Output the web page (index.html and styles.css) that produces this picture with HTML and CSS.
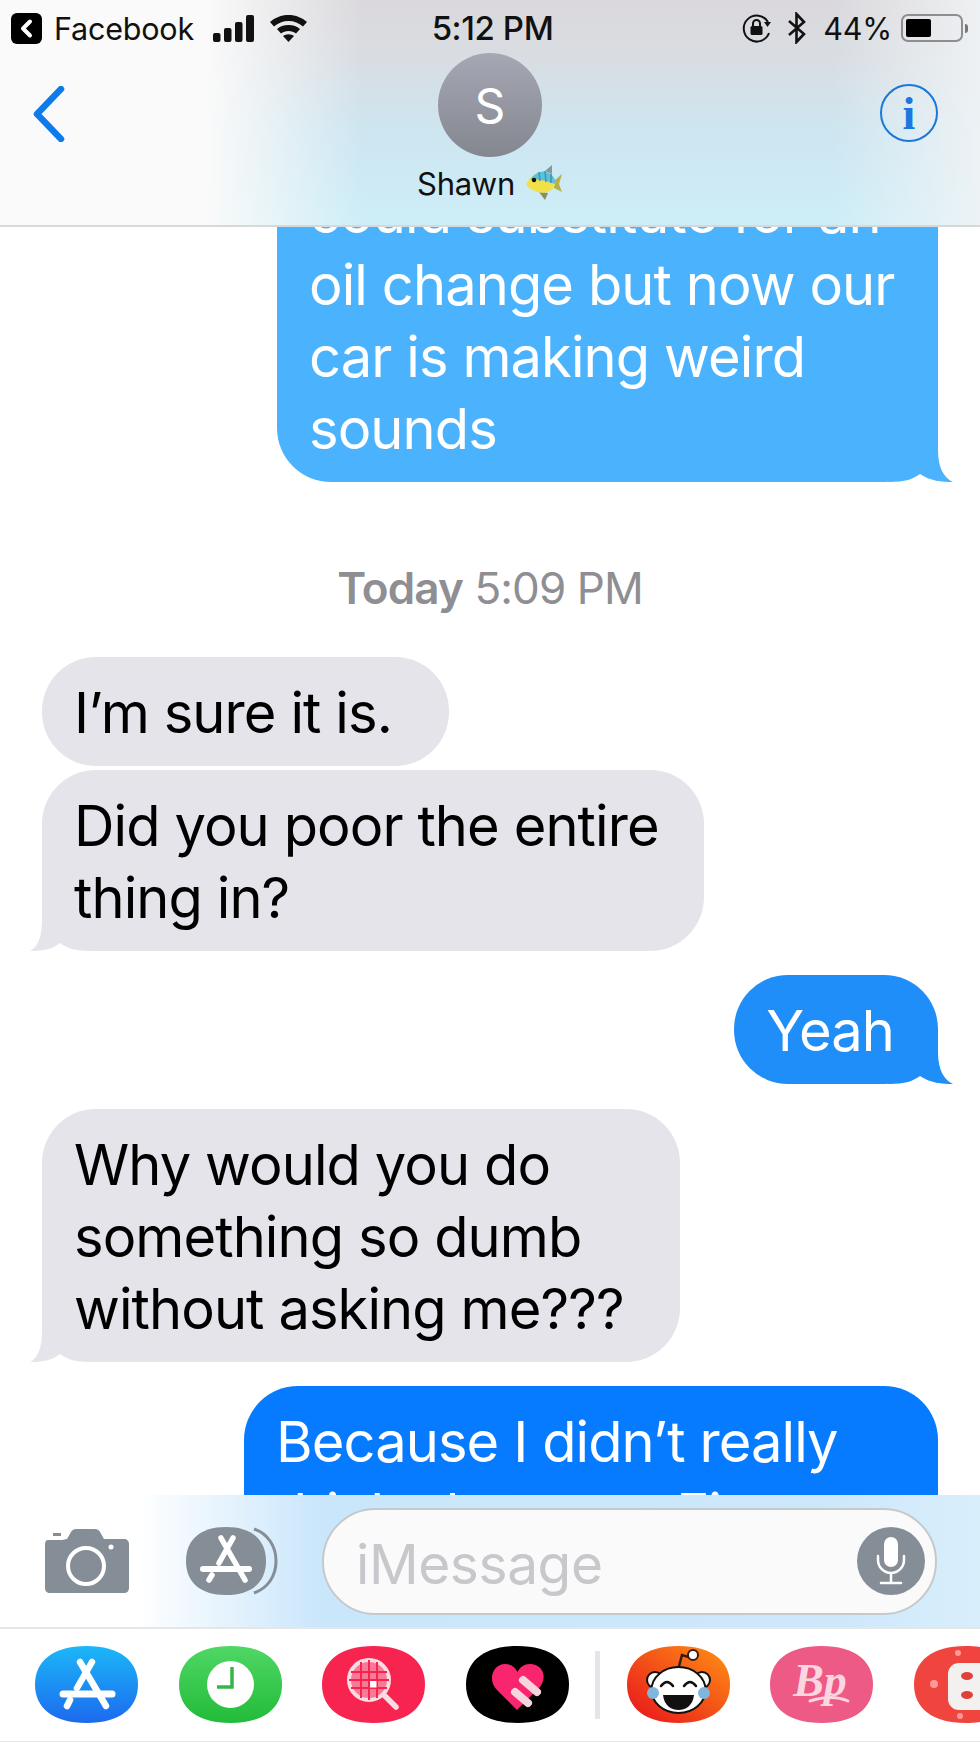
FILE: index.html
```html
<!DOCTYPE html>
<html lang="en">
<head>
<meta charset="utf-8">
<title>Shawn</title>
<link rel="stylesheet" href="styles.css">
</head>
<body>
<div class="phone">
  <header class="header">
    <div class="status">
      <div class="status-left">
        <span class="fb-box"><svg width="31" height="31" viewBox="0 0 31 31"><path d="M19 8.500 12 15.500 19 22.500" fill="none" stroke="#fff" stroke-width="4" stroke-linecap="round" stroke-linejoin="round"/></svg></span>
        <span class="status-text">Facebook</span>
        <svg class="signal" width="42" height="27" viewBox="0 0 42 27"><rect x="0" y="18" width="7.500" height="9" rx="2"/><rect x="11" y="13" width="7.500" height="14" rx="2"/><rect x="22" y="7" width="7.500" height="20" rx="2"/><rect x="33" y="0" width="8" height="27" rx="2"/></svg>
        <svg class="wifi" width="37" height="27" viewBox="0 0 37 27"><path d="M18.500 0C11 0 5 2.700 0 7l4 4.500C8 8 13 6 18.500 6S29 8 33 11.500L37 7C32 2.700 26 0 18.500 0z"/><path d="M18.500 10C13.500 10 10 11.500 7 14l4 4.500c2-1.500 4.500-2.500 7.500-2.500s5.500 1 7.500 2.500L30 14c-3-2.500-6.500-4-11.500-4z"/><path d="M18.500 27 13 21c1.500-1 3.500-1.800 5.500-1.800S22.500 20 24 21z"/></svg>
      </div>
      <div class="status-text status-time">5:12 PM</div>
      <div class="status-right">
        <svg width="30" height="30" viewBox="0 0 30 30"><path d="M26 9A13 13 0 1 0 27 20" fill="none" stroke="#111" stroke-width="2"/><path d="M22 9h7l-3.500 5z" fill="#111"/><rect x="8.500" y="13" width="12" height="9" rx="1.500" fill="#111"/><path d="M11 13v-2.500a3.500 3.500 0 0 1 7 0V13" fill="none" stroke="#111" stroke-width="2"/></svg>
        <svg class="bt" width="20" height="32" viewBox="0 0 20 32"><path d="M2 9 17 22 9.500 30V2L17 10 2 23" fill="none" stroke="#111" stroke-width="2.600"/></svg>
        <span class="status-text">44%</span>
        <span class="battery"><span class="battery-fill"></span></span>
        <span class="battery-nub"></span>
      </div>
    </div>
    <div class="nav">
      <svg class="back" width="32" height="56" viewBox="0 0 32 56"><path d="M28 3 4 28 28 53" fill="none" stroke="#0f7bea" stroke-width="6.500" stroke-linecap="round" stroke-linejoin="round"/></svg>
      <div class="contact">
        <div class="avatar">S</div>
        <div class="contact-name">
          <span>Shawn</span>
          <svg width="38" height="36" viewBox="0 0 38 36"><path d="M20 6 27 0 27 9z" fill="#7f9aa0"/><path d="M29 16 37 9 34 19 37 27 29 23z" fill="#b5b04a"/><path d="M14 27l6 8 3-7z" fill="#8a8f5a"/><path d="M1 20C6 9 16 4 24 8c5 3 7 8 6 12-3 7-11 9-17 7-5-1-9-4-12-7z" fill="#f2e04a"/><path d="M5 15C9 8 17 4 24 8c5 3 7 7 6 11-9-4-17-5-25-4z" fill="#5cc2dc"/><path d="M14 7 15 16M20 6 21 17M26 9 26 18" stroke="#3f93b5" stroke-width="1.500" fill="none"/><circle cx="9" cy="15" r="2.200" fill="#111"/></svg>
        </div>
      </div>
      <div class="info"><span>i</span></div>
    </div>
  </header>

  <main class="messages">
    <div class="bubble sent tone-sky first">could substitute for an<br>oil change but now our<br>car is making weird<br>sounds
      <svg class="tail tail-right" width="65" height="56" viewBox="0 0 65 56"><path d="M0 56C18 56 25 53 32 48 42 55 54 56 65 56 56 52 50 42 50 24V0z"/></svg>
    </div>
    <div class="timestamp"><b>Today</b> 5:09 PM</div>
    <div class="bubble received short">I’m sure it is.</div>
    <div class="bubble received joined">Did you poor the entire<br>thing in?
      <svg class="tail tail-left" width="65" height="56" viewBox="0 0 65 56"><path d="M0 56C18 56 25 53 32 48 40 55 52 56 62 56 54 52 50 42 50 24V0z"/></svg>
    </div>
    <div class="bubble sent tone-mid">Yeah
      <svg class="tail tail-right" width="65" height="56" viewBox="0 0 65 56"><path d="M0 56C18 56 25 53 32 48 42 55 54 56 65 56 56 52 50 42 50 24V0z"/></svg>
    </div>
    <div class="bubble received long">Why would you do<br>something so dumb<br>without asking me???
      <svg class="tail tail-left" width="65" height="56" viewBox="0 0 65 56"><path d="M0 56C18 56 25 53 32 48 40 55 52 56 62 56 54 52 50 42 50 24V0z"/></svg>
    </div>
    <div class="bubble sent tone-deep wide">Because I didn’t really<br>think about our Fiesta</div>
  </main>

  <section class="composer">
    <svg class="camera" width="84" height="64" viewBox="0 0 84 64"><path d="M3 11H17L22 10 26 3C27 1 29 0 31 0H50C52 0 54 1 55 3L59 10H79C82 10 84 12 84 15V59C84 62 82 64 79 64H5C2 64 0 62 0 59V15C0 13 1 11 3 11z" fill="#858d96"/><rect x="8" y="4" width="8" height="3" fill="#858d96"/><circle cx="41" cy="37" r="18" fill="none" stroke="#fff" stroke-width="4"/><circle cx="66" cy="18" r="2.500" fill="#fff"/></svg>
    <svg class="apps" width="92" height="70" viewBox="0 0 92 70"><path d="M68 3C82 8 90 20 90 35S82 62 68 67" fill="none" stroke="#858d96" stroke-width="3"/><path d="M40 1C66 1 80 14 80 35 80 56 66 69 40 69 14 69 0 56 0 35 0 14 14 1 40 1z" fill="#858d96"/><g fill="none" stroke="#fff" stroke-width="5.500" stroke-linecap="round"><path d="M47 12 33 37"/><path d="M26 49 23 54"/><path d="M35 12 59 54"/><path d="M17 43H63" stroke-width="6"/></g></svg>
    <div class="input">
      <span class="placeholder">iMessage</span>
      <span class="mic"><svg width="30" height="50" viewBox="0 0 30 50"><rect x="8" y="1" width="14" height="30" rx="7" fill="#fff"/><path d="M2 20V24A13 13 0 0 0 28 24V20M15 38V47M5 47H25" fill="none" stroke="#fff" stroke-width="2.500" stroke-linecap="round"/></svg></span>
    </div>
  </section>

  <nav class="apps-row">
    <svg class="app" width="103" height="77" viewBox="0 0 103 77"><defs><linearGradient id="g-blue" x1="0" y1="0" x2="0" y2="1"><stop offset="0" stop-color="#1cb7f8"/><stop offset="1" stop-color="#1c6aee"/></linearGradient></defs><path d="M51.500 0C85 0 103 15 103 38.500 103 62 85 77 51.500 77 18 77 0 62 0 38.500 0 15 18 0 51.500 0z" fill="url(#g-blue)"/><g fill="none" stroke="#fff" stroke-width="6.500" stroke-linecap="round"><path d="M57 16 42 42"/><path d="M35 54 32 60"/><path d="M45 16 71 60"/><path d="M28 48H77" stroke-width="7"/></g></svg>
    <svg class="app" width="103" height="77" viewBox="0 0 103 77"><defs><linearGradient id="g-green" x1="0" y1="0" x2="0" y2="1"><stop offset="0" stop-color="#4fd764"/><stop offset="1" stop-color="#22bb3a"/></linearGradient></defs><path d="M51.500 0C85 0 103 15 103 38.500 103 62 85 77 51.500 77 18 77 0 62 0 38.500 0 15 18 0 51.500 0z" fill="url(#g-green)"/><circle cx="51.500" cy="38.500" r="23.500" fill="#fff"/><path d="M53 21V41H38" fill="none" stroke="#34b64a" stroke-width="3.500"/></svg>
    <svg class="app" width="103" height="77" viewBox="0 0 103 77"><path d="M51.500 0C85 0 103 15 103 38.500 103 62 85 77 51.500 77 18 77 0 62 0 38.500 0 15 18 0 51.500 0z" fill="#f7244f"/><circle cx="47" cy="34" r="20" fill="#f97a96" stroke="#fbdce2" stroke-width="4"/><path d="M29 26H65M27 34H67M29 42H65M39 16V52M47 14V54M55 16V52" stroke="#f7244f" stroke-width="2" fill="none"/><rect x="48" y="35" width="6.500" height="6.500" fill="#fff"/><path d="M62 49 74 61" stroke="#fbdce2" stroke-width="5.500" stroke-linecap="round"/></svg>
    <svg class="app" width="103" height="77" viewBox="0 0 103 77"><path d="M51.500 0C85 0 103 15 103 38.500 103 62 85 77 51.500 77 18 77 0 62 0 38.500 0 15 18 0 51.500 0z" fill="#000"/><path d="M51 64 31 44C21 34 27 18 39 18 45 18 49 21 51.500 26 54 21 58 18 64 18 76 18 82 30 74 41z" fill="#f9256e"/><g stroke-linecap="round" fill="none"><path d="M57 34 71 46" stroke="#f6d5dc" stroke-width="8"/><path d="M49 46 62 57" stroke="#f6d5dc" stroke-width="8"/></g></svg>
    <span class="divider"></span>
    <svg class="app" width="103" height="77" viewBox="0 0 103 77"><defs><linearGradient id="g-red" x1="0" y1="1" x2="1" y2="0"><stop offset="0" stop-color="#e8111c"/><stop offset="1" stop-color="#ff9214"/></linearGradient></defs><path d="M51.500 0C85 0 103 15 103 38.500 103 62 85 77 51.500 77 18 77 0 62 0 38.500 0 15 18 0 51.500 0z" fill="url(#g-red)"/><path d="M51 24 55 9 65 12" fill="none" stroke="#3a1a0a" stroke-width="2.500"/><circle cx="66" cy="9" r="5" fill="#fff" stroke="#3a1a0a" stroke-width="2"/><circle cx="28" cy="34" r="8" fill="#fff" stroke="#111" stroke-width="2"/><circle cx="75" cy="34" r="8" fill="#fff" stroke="#111" stroke-width="2"/><ellipse cx="51.500" cy="44" rx="27" ry="23" fill="#fff" stroke="#111" stroke-width="2"/><path d="M34 40Q40 32 46 40M57 40Q63 32 69 40" fill="none" stroke="#111" stroke-width="2.500" stroke-linecap="round"/><path d="M36 49H67C66 60 58 64 51.500 64S37 60 36 49z" fill="#111"/><circle cx="26" cy="47" r="6" fill="#7fb6df"/><circle cx="77" cy="47" r="6" fill="#7fb6df"/></svg>
    <svg class="app" width="103" height="77" viewBox="0 0 103 77"><path d="M51.500 0C85 0 103 15 103 38.500 103 62 85 77 51.500 77 18 77 0 62 0 38.500 0 15 18 0 51.500 0z" fill="#ee5a86"/><text x="50" y="50" class="bp-text">Bp</text><path d="M40 55Q62 48 78 55" fill="none" stroke="#fbd5df" stroke-width="3" stroke-linecap="round"/></svg>
    <svg class="app" width="103" height="77" viewBox="0 0 103 77"><path d="M51.500 0C85 0 103 15 103 38.500 103 62 85 77 51.500 77 18 77 0 62 0 38.500 0 15 18 0 51.500 0z" fill="#f0453f"/><circle cx="20" cy="38" r="4" fill="#f99"/><circle cx="44" cy="7" r="3" fill="#f99"/><circle cx="46" cy="70" r="3" fill="#f99"/><rect x="34" y="17" width="50" height="47" rx="11" fill="#f3f1ef"/><ellipse cx="53" cy="30" rx="6" ry="4" fill="#e0403a"/><ellipse cx="53" cy="49" rx="6" ry="4" fill="#e0403a"/></svg>
  </nav>
</div>
</body>
</html>
```

FILE: styles.css
```css
* { box-sizing: border-box; }
html, body { margin: 0; padding: 0; background: #fff; }
.phone {
  width: 980px;
  height: 1742px;
  display: flex;
  flex-direction: column;
  overflow: hidden;
  font-family: Inter, "Liberation Sans", sans-serif;
  color: #000;
}

/* header */
.header {
  flex: 0 0 227px;
  border-bottom: 2px solid #d8d8d8;
  background:
    linear-gradient(90deg, #fafafa 0, #fafafa 21%, rgba(250,250,250,0) 37%, rgba(245,246,247,0) 85%, rgba(240,243,245,.9) 100%),
    linear-gradient(180deg, #dbd8dc 0, #d8dde2 25%, #cde6f1 60%, #cdeef8 100%);
  position: relative;
  z-index: 1;
}
.status {
  display: grid;
  grid-template-columns: 1fr auto 1fr;
  align-items: center;
  height: 50px;
  padding: 6px 12px 0 11px;
}
.status-text { font-size: 30.500px; color: #111; letter-spacing: -0.2px; }
.status-time { font-size: 33px; font-weight: 500; letter-spacing: -0.4px; margin-left: 6px; }
.status-left { display: flex; align-items: center; }
.fb-box { width: 31px; height: 31px; border-radius: 6px; background: #000; display: flex; }
.fb-box + .status-text { margin-left: 12px; }
.signal { margin-left: 19px; fill: #111; }
.wifi { margin-left: 15px; fill: #111; }
.status-right { display: flex; align-items: center; justify-content: flex-end; }
.bt { margin-left: 15px; }
.status-right .status-text { margin-left: 16px; }
.battery { width: 62px; height: 28px; margin-left: 9px; border: 2px solid #8e8e8e; border-radius: 7px; padding: 3px; display: flex; }
.battery-fill { width: 25px; background: #000; border-radius: 2px; }
.battery-nub { width: 3px; height: 9px; margin-left: 2px; background: #777; border-radius: 0 3px 3px 0; }

.nav {
  display: grid;
  grid-template-columns: 1fr auto 1fr;
  align-items: start;
  padding: 3px 42px 0;
}
.back { margin: 33px 0 0 -9px; }
.contact { display: flex; flex-direction: column; align-items: center; }
.avatar {
  width: 104px;
  height: 104px;
  border-radius: 50%;
  background: linear-gradient(180deg, #a5a8b4, #84878f);
  color: #fff;
  font-size: 48px;
  display: flex;
  align-items: center;
  justify-content: center;
}
.contact-name { display: flex; align-items: center; gap: 10px; margin-top: 6px; font-size: 31px; letter-spacing: -0.3px; color: #111; height: 40px; }
.info {
  justify-self: end;
  margin-top: 31px;
  width: 58px;
  height: 58px;
  border: 2.500px solid #1a78d8;
  border-radius: 50%;
  display: flex;
  align-items: center;
  justify-content: center;
  color: #1a78e0;
  font: bold 46px "Liberation Serif", serif;
}

/* messages */
.messages {
  flex: 1 1 0;
  min-height: 0;
  overflow: hidden;
  padding: 0 42px;
  display: flex;
  flex-direction: column;
  align-items: flex-start;
}
.bubble {
  position: relative;
  flex: none;
  font-size: 56px;
  line-height: 72px;
  padding: 19.500px 48px 17.500px 32px;
  border-radius: 54px;
  white-space: nowrap;
  letter-spacing: -0.9px;
}
.received { background: #e4e4ea; color: #000; margin-top: 24px; fill: #e4e4ea; }
.received.short { margin-top: 0; padding-right: 57px; }
.received.joined { margin-top: 4px; padding-right: 45px; }
.received.long { margin-top: 25px; width: 638px; }
.sent { color: #fff; align-self: flex-end; margin-top: 24px; }
.tone-sky { background: #4bb3fd; fill: #4bb3fd; }
.tone-mid { background: #1f8ef9; fill: #1f8ef9; padding-right: 44px; }
.tone-deep { background: #077bff; fill: #077bff; }
.first { margin-top: -70px; width: 661px; }
.wide { width: 694px; }
.tail { position: absolute; bottom: 0; }
.tail-right { right: -15px; }
.tail-left { left: -15px; transform: scaleX(-1); }
.timestamp {
  flex: none;
  align-self: center;
  height: 50px;
  line-height: 50px;
  margin: 81px 0 44px;
  font-size: 44px;
  letter-spacing: -0.9px;
  color: #8e8e93;
}
.timestamp b { font-weight: 600; }

/* composer */
.composer {
  flex: 0 0 134px;
  display: flex;
  align-items: center;
  padding: 0 43px 0 45px;
  border-bottom: 2px solid #e6e6e6;
  background: linear-gradient(90deg, #fff 0, #fff 14%, #c9e6fb 33%, #cde8fb 85%, #d9eefb 100%);
}
.apps { margin-left: 57px; }
.input {
  margin-left: 44px;
  flex: 1;
  height: 107px;
  border: 2.500px solid #c5c9cc;
  border-radius: 54px;
  background: #fafafa;
  display: flex;
  align-items: center;
  justify-content: space-between;
  padding: 0 10px 0 32px;
}
.placeholder { font-size: 55px; letter-spacing: -0.4px; color: #c7c7cc; padding-top: 5px; }
.mic {
  width: 68px;
  height: 68px;
  border-radius: 50%;
  background: #858d96;
  display: flex;
  align-items: center;
  justify-content: center;
}

/* app strip */
.apps-row {
  flex: 0 0 113px;
  display: flex;
  align-items: flex-start;
  gap: 40.500px;
  padding: 17px 0 0 35px;
  border-bottom: 1px solid #e6e6e6;
  background: #fff;
  overflow: hidden;
}
.app { flex: none; }
.divider { flex: none; width: 5px; height: 68px; margin: 5px -14px 0 -14px; background: #e4e5ea; }
.bp-text { font: italic bold 46px "Liberation Serif", serif; fill: #fbd5df; text-anchor: middle; }
```
